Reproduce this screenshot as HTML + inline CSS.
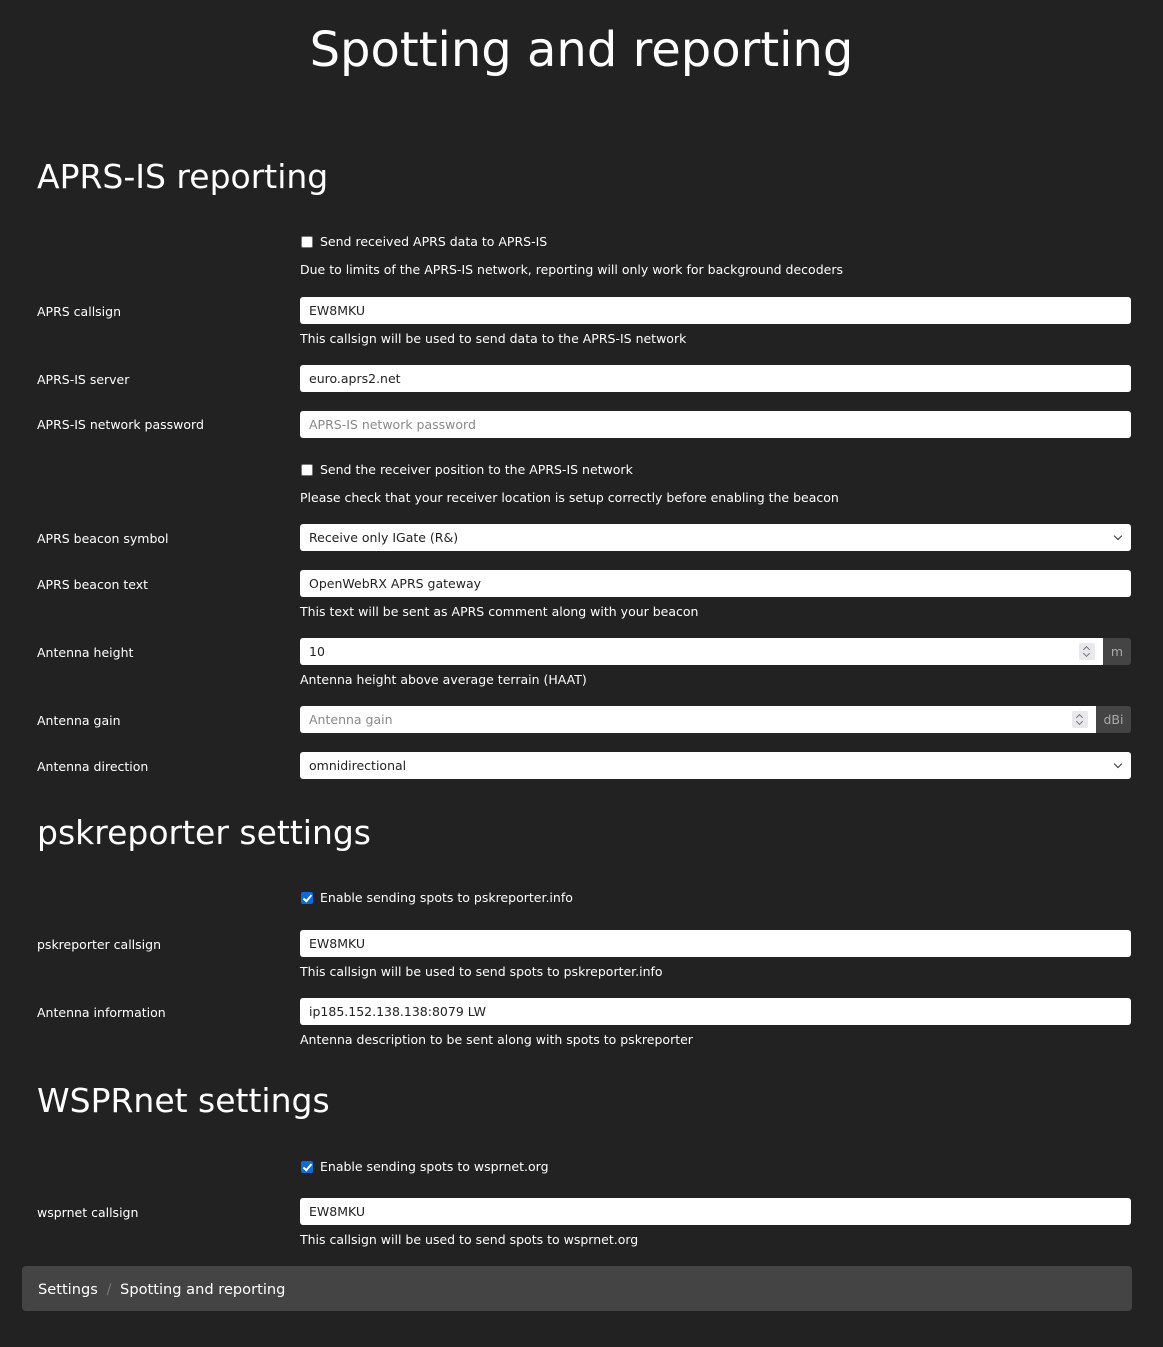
<!DOCTYPE html>
<html><head><meta charset="utf-8"><style>
body{margin:0;background:#222;width:1163px;height:1347px;position:relative;font-family:"DejaVu Sans","Liberation Sans",sans-serif;color:#fff;overflow:hidden}
.a{position:absolute;white-space:nowrap}
.t{font-size:12.5px;line-height:16px;transform:translateY(-7px)}
.lab{left:37px}
.h1{font-size:48px;left:0;width:1163px;text-align:center;top:22px;line-height:56px}
.h2{font-size:33px;left:37px;line-height:40px}
.in{left:300px;width:831px;height:27px;background:#fff;border-radius:3px;color:#222;font-size:12.5px;line-height:28px;box-sizing:border-box;padding-left:9px}
.ph{color:#888}
.cb{left:301px;width:12px;height:12px;background:#fff;border:1px solid #767676;border-radius:2px;box-sizing:border-box}
.cb.on{background:#0b6bdc;border-color:#0b6bdc}
.cb.on::after{content:"";position:absolute;left:3px;top:0px;width:3px;height:7px;border-right:2px solid #fff;border-bottom:2px solid #fff;transform:rotate(40deg)}
.sel::after{content:"";position:absolute;right:10px;top:9px;width:5px;height:5px;border-right:1.5px solid #333;border-bottom:1.5px solid #333;transform:rotate(45deg)}
.spin{position:absolute;top:5px;width:16px;height:17px;background:#e9e9ed;border-radius:2px}
.spin::before,.spin::after{content:"";position:absolute;left:5px;width:4px;height:4px;border-left:1px solid #777;border-top:1px solid #777}
.spin::before{top:4px;transform:rotate(45deg)}
.spin::after{top:8px;transform:rotate(225deg)}
.add{height:27px;background:#444;color:#aaa;font-size:12.5px;line-height:27px;text-align:center;border-radius:0 3px 3px 0}
</style></head><body>
<div class="a h1">Spotting and reporting</div>
<div class="a h2" style="top:157px">APRS-IS reporting</div>

<div class="a cb" style="top:236px"></div><div class="a t" style="left:320px;top:241px">Send received APRS data to APRS-IS</div>
<div class="a t" style="left:300px;top:269px">Due to limits of the APRS-IS network, reporting will only work for background decoders</div>

<div class="a t lab" style="top:311px">APRS callsign</div><div class="a in" style="top:297px">EW8MKU</div>
<div class="a t" style="left:300px;top:338px">This callsign will be used to send data to the APRS-IS network</div>

<div class="a t lab" style="top:379px">APRS-IS server</div><div class="a in" style="top:365px">euro.aprs2.net</div>
<div class="a t lab" style="top:424px">APRS-IS network password</div><div class="a in ph" style="top:411px">APRS-IS network password</div>

<div class="a cb" style="top:464px"></div><div class="a t" style="left:320px;top:469px">Send the receiver position to the APRS-IS network</div>
<div class="a t" style="left:300px;top:497px">Please check that your receiver location is setup correctly before enabling the beacon</div>

<div class="a t lab" style="top:538px">APRS beacon symbol</div><div class="a in sel" style="top:524px">Receive only IGate (R&amp;)</div>
<div class="a t lab" style="top:584px">APRS beacon text</div><div class="a in" style="top:570px">OpenWebRX APRS gateway</div>
<div class="a t" style="left:300px;top:611px">This text will be sent as APRS comment along with your beacon</div>

<div class="a t lab" style="top:652px">Antenna height</div><div class="a in" style="top:638px;width:803px;border-radius:3px 0 0 3px">10<div class="spin" style="right:8px"></div></div>
<div class="a add" style="left:1103px;top:638px;width:28px">m</div>
<div class="a t" style="left:300px;top:679px">Antenna height above average terrain (HAAT)</div>

<div class="a t lab" style="top:720px">Antenna gain</div><div class="a in ph" style="top:706px;width:796px;border-radius:3px 0 0 3px">Antenna gain<div class="spin" style="right:8px"></div></div>
<div class="a add" style="left:1096px;top:706px;width:35px">dBi</div>

<div class="a t lab" style="top:766px">Antenna direction</div><div class="a in sel" style="top:752px">omnidirectional</div>

<div class="a h2" style="top:813px">pskreporter settings</div>
<div class="a cb on" style="top:892px"></div><div class="a t" style="left:320px;top:897px">Enable sending spots to pskreporter.info</div>
<div class="a t lab" style="top:944px">pskreporter callsign</div><div class="a in" style="top:930px">EW8MKU</div>
<div class="a t" style="left:300px;top:971px">This callsign will be used to send spots to pskreporter.info</div>
<div class="a t lab" style="top:1012px">Antenna information</div><div class="a in" style="top:998px">ip185.152.138.138:8079 LW</div>
<div class="a t" style="left:300px;top:1039px">Antenna description to be sent along with spots to pskreporter</div>

<div class="a h2" style="top:1081px">WSPRnet settings</div>
<div class="a cb on" style="top:1161px"></div><div class="a t" style="left:320px;top:1166px">Enable sending spots to wsprnet.org</div>
<div class="a t lab" style="top:1212px">wsprnet callsign</div><div class="a in" style="top:1198px">EW8MKU</div>
<div class="a t" style="left:300px;top:1239px">This callsign will be used to send spots to wsprnet.org</div>

<div class="a" style="left:22px;top:1266px;width:1110px;height:45px;background:#444;border-radius:4px"></div>
<div class="a" style="left:38px;top:1281px;font-size:14.6px;line-height:18px">Settings <span style="color:#777;margin:0 4px">/</span> Spotting and reporting</div>
</body></html>
